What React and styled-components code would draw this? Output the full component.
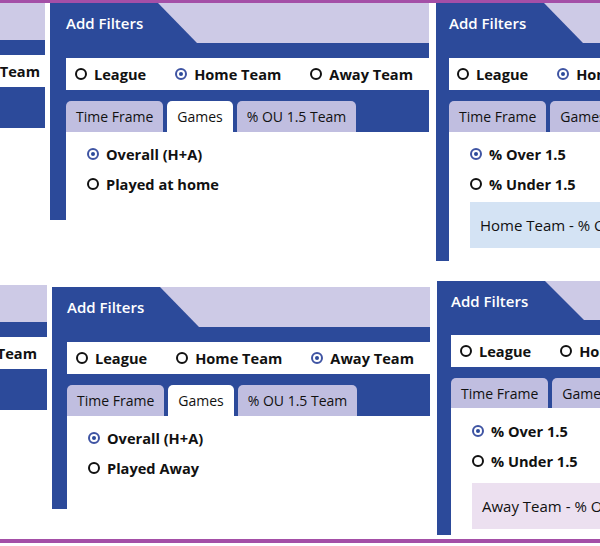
import styled, { createGlobalStyle, css } from "styled-components";

const blue = "#2c4a9a";
const lavender = "#cdcae6";
const tabLavender = "#c0bee0";
const purple = "#a44fa7";

const GlobalStyle = createGlobalStyle`
    body {
        margin: 0;
        background: #fff;
        font-family: "Open Sans", "Liberation Sans", sans-serif;
        color: #111;
    }
`;

const flexRow = css`
    display: flex;
    flex-direction: row;
`;

const Page = styled.div`
    width: 600px;
    height: 546px;
    box-sizing: border-box;
    border-top: 3px solid ${purple};
    display: flex;
    flex-direction: column;
    overflow: hidden;
`;

const Row = styled.div(
    flexRow,
    css`
        align-items: flex-start;
        margin-top: ${(p) => p.$mt || 0}px;
    `
);

const Clip = styled.div(
    flexRow,
    css`
        flex-shrink: 0;
        width: ${(p) => p.$w}px;
        margin-left: ${(p) => p.$ml || 0}px;
        margin-top: ${(p) => p.$mt || 0}px;
        overflow: hidden;
        justify-content: ${(p) => (p.$end ? "flex-end" : "flex-start")};
    `
);

const Panel = styled.div`
    width: 380px;
    flex-shrink: 0;
    display: flex;
    flex-direction: column;
`;

const Header = styled.div(
    flexRow,
    css`
        height: ${(p) => p.$h}px;
        background: ${lavender};
    `
);

const HeaderTab = styled.div(
    flexRow,
    css`
        width: 147px;
        box-sizing: border-box;
        padding-left: ${(p) => p.$strip}px;
        align-items: center;
        background: ${blue};
        clip-path: polygon(0 0, calc(100% - 39px) 0, 100% 100%, 0 100%);
        color: #fff;
        font-size: 15px;
        font-weight: 600;
    `
);

const Band = styled.div`
    background: ${blue};
    padding: 15px 0 11px ${(p) => p.$strip}px;
`;

const RadioRow = styled.div(
    flexRow,
    css`
        height: 32px;
        align-items: center;
        gap: 29px;
        padding: 0 ${(p) => p.$padR || 0}px 0 ${(p) => p.$padL}px;
        justify-content: ${(p) => (p.$end ? "flex-end" : "flex-start")};
        background: #fff;
    `
);

const Option = styled.label(
    flexRow,
    css`
        align-items: center;
        gap: 7px;
        height: ${(p) => p.$h || 20}px;
        font-size: 14.6px;
        font-weight: 700;
        white-space: nowrap;
    `
);

const Radio = styled.span`
    width: 12px;
    height: 12px;
    box-sizing: border-box;
    flex-shrink: 0;
    border-radius: 50%;
    border: 2px solid ${(p) => (p.$on ? "#3f54a3" : "#111")};
    display: grid;
    place-items: center;

    &::after {
        content: "";
        width: 4px;
        height: 4px;
        border-radius: 50%;
        background: ${(p) => (p.$on ? "#2c4a9a" : "transparent")};
    }
`;

const TabBar = styled.div(
    flexRow,
    css`
        height: ${(p) => p.$h}px;
        gap: 4px;
        padding-left: ${(p) => p.$strip}px;
        background: ${blue};
        align-items: stretch;
    `
);

const Tab = styled.div(
    flexRow,
    css`
        align-items: center;
        padding: 0 10px;
        border-radius: 5px 5px 0 0;
        background: ${(p) => (p.$active ? "#fff" : tabLavender)};
        font-size: 14px;
        font-weight: 500;
        white-space: nowrap;
    `
);

const Content = styled.div`
    border-left: ${(p) => p.$strip}px solid ${blue};
    padding: ${(p) => p.$pt}px 0 ${(p) => p.$pb}px 21px;
    background: #fff;
`;

const Note = styled.div(
    flexRow,
    css`
        height: 46px;
        margin-top: ${(p) => p.$mt}px;
        align-items: center;
        padding-left: 10px;
        background: ${(p) => p.$tone};
        font-size: 15px;
        font-weight: 500;
        white-space: nowrap;
    `
);

const Footer = styled.div`
    height: 4px;
    margin-top: 4px;
    background: ${purple};
    flex-shrink: 0;
`;

const scopes = ["League", "Home Team", "Away Team"];
const tabs = ["Time Frame", "Games", "% OU 1.5 Team"];

const FilterPanel = ({
    headerH = 40,
    strip = 16,
    padL = 9,
    padR = 0,
    rowEnd = false,
    scope,
    tab,
    tabsH = 31,
    options = [],
    picked = 0,
    note,
    noteTone,
    noteMt = 3,
    pt = 7,
    pb = 21,
}) => (
    <Panel>
        <Header $h={headerH}>
            <HeaderTab $strip={strip}>Add Filters</HeaderTab>
        </Header>
        <Band $strip={strip}>
            <RadioRow $padL={padL} $padR={padR} $end={rowEnd}>
                {scopes.map((s) => (
                    <Option key={s}>
                        <Radio $on={s === scope} />
                        {s}
                    </Option>
                ))}
            </RadioRow>
        </Band>
        <TabBar $h={tabsH} $strip={strip}>
            {tabs.map((t) => (
                <Tab key={t} $active={t === tab}>
                    {t}
                </Tab>
            ))}
        </TabBar>
        <Content $strip={strip} $pt={pt} $pb={pb}>
            {options.map((o, i) => (
                <Option key={o} $h={30}>
                    <Radio $on={i === picked} />
                    {o}
                </Option>
            ))}
            {note && (
                <Note $tone={noteTone} $mt={noteMt}>
                    {note}
                </Note>
            )}
        </Content>
    </Panel>
);

const App = () => (
    <Page>
        <GlobalStyle />
        <Row>
            <Clip $w={45} $end>
                <FilterPanel headerH={37} rowEnd padR={5} scope="Away Team" tab="Games" tabsH={30} />
            </Clip>
            <Clip $w={379} $ml={5}>
                <FilterPanel
                    scope="Home Team"
                    tab="Games"
                    options={["Overall (H+A)", "Played at home"]}
                />
            </Clip>
            <Clip $w={164} $ml={7}>
                <FilterPanel
                    strip={13}
                    padL={8}
                    scope="Home Team"
                    tab="% OU 1.5 Team"
                    options={["% Over 1.5", "% Under 1.5"]}
                    note="Home Team - % Over 1.5 in the selected games"
                    noteTone="#d4e3f4"
                    pb={13}
                />
            </Clip>
        </Row>
        <Row $mt={20}>
            <Clip $w={47} $mt={4} $end>
                <FilterPanel headerH={37} rowEnd padR={10} scope="Away Team" tab="Games" tabsH={30} />
            </Clip>
            <Clip $w={378} $ml={5} $mt={6}>
                <FilterPanel
                    strip={15}
                    scope="Away Team"
                    tab="Games"
                    options={["Overall (H+A)", "Played Away"]}
                    pb={26}
                />
            </Clip>
            <Clip $w={163} $ml={7}>
                <FilterPanel
                    headerH={39}
                    strip={14}
                    scope="Away Team"
                    tab="% OU 1.5 Team"
                    tabsH={30}
                    options={["% Over 1.5", "% Under 1.5"]}
                    note="Away Team - % Over 1.5 in the selected games"
                    noteTone="#ece0f0"
                    noteMt={7}
                    pt={8}
                    pb={6}
                />
            </Clip>
        </Row>
        <Footer />
    </Page>
);

export default App;
